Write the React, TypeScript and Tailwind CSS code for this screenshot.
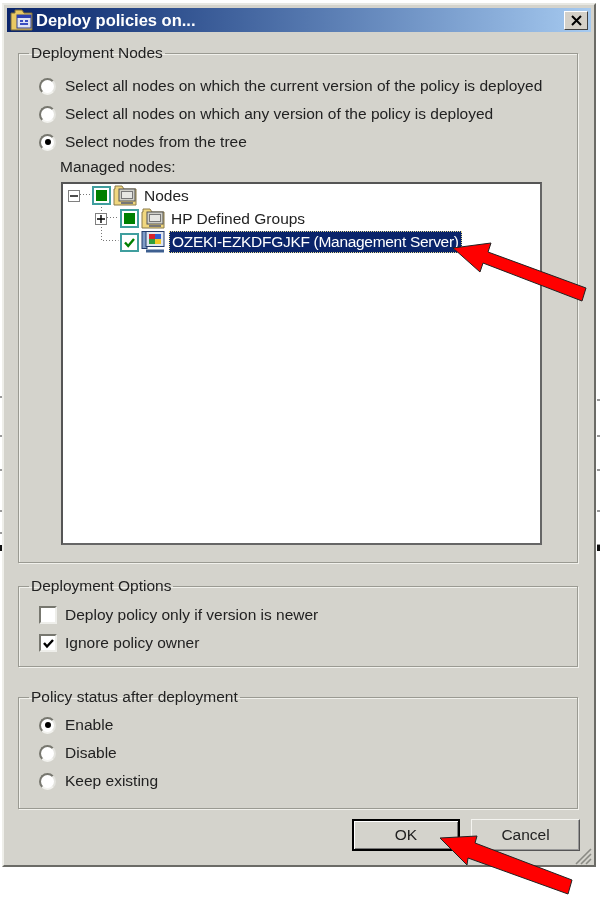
import React from 'react'

const font = "font-['Liberation_Sans',Arial,sans-serif]"

function Radio({ checked }: { checked?: boolean }) {
  return (
    <span className="relative w-[17px] h-[17px] shrink-0 rounded-full bg-white border-2 border-t-[#77776f] border-l-[#77776f] border-r-[#e4e4df] border-b-[#f2f2ee] flex items-center justify-center">
      {checked && <span className="w-[6px] h-[6px] rounded-full bg-black" />}
    </span>
  )
}

function Check({ checked }: { checked?: boolean }) {
  return (
    <span className="w-[18px] h-[18px] shrink-0 bg-white border-2 border-t-[#77776f] border-l-[#77776f] border-r-[#eeeeea] border-b-[#eeeeea] flex items-center justify-center">
      {checked && (
        <svg width="13" height="13" viewBox="0 0 13 13">
          <path d="M2 6l3 3.5L11 3" fill="none" stroke="#000" strokeWidth="2.4" />
        </svg>
      )}
    </span>
  )
}

function Option({ kind, checked, label }: { kind: 'radio' | 'check'; checked?: boolean; label: string }) {
  return (
    <div className="flex items-center h-[28px] pl-[20px]">
      <span className="w-[26px] flex">{kind === 'radio' ? <Radio checked={checked} /> : <Check checked={checked} />}</span>
      <span className="text-[15.5px] text-[#222]">{label}</span>
    </div>
  )
}

function Group({ title, className, children }: { title: string; className: string; children: React.ReactNode }) {
  return (
    <fieldset className={`border border-[#9a9a92] shadow-[inset_1px_1px_0_#f1f1ec,1px_1px_0_#f1f1ec] ml-[11px] mr-[13px] ${className}`}>
      <legend className="ml-[10px] px-[2px] text-[15.5px] leading-[20px] text-[#222]">{title}</legend>
      {children}
    </fieldset>
  )
}

function TreeCheck({ mark }: { mark: 'square' | 'tick' }) {
  return (
    <span className="w-[19px] h-[19px] shrink-0 bg-white border-2 border-[#3f9e9e] flex items-center justify-center">
      {mark === 'square' ? (
        <span className="w-[11px] h-[11px] bg-[#008000]" />
      ) : (
        <svg width="13" height="13" viewBox="0 0 13 13">
          <path d="M2 6.5l3.2 3.5L11 3" fill="none" stroke="#008000" strokeWidth="2.4" />
        </svg>
      )}
    </span>
  )
}

function Expander({ sign }: { sign: '+' | '-' }) {
  return (
    <span className="w-[12px] h-[12px] shrink-0 bg-white border border-[#808080] flex items-center justify-center">
      <svg width="8" height="8" viewBox="0 0 8 8">
        <path d={sign === '+' ? 'M0 4h8M4 0v8' : 'M0 4h8'} stroke="#000" strokeWidth="1.4" />
      </svg>
    </span>
  )
}

function FolderPc() {
  return (
    <svg width="24" height="22" viewBox="0 0 24 22" className="shrink-0">
      <path d="M1 4h1V1h7l2 3h12v16H1z" fill="#f0d77f" stroke="#8a7a4a" />
      <rect x="6" y="4" width="16" height="12" fill="#cfcfc8" stroke="#555" />
      <rect x="8.5" y="6.5" width="11" height="7" fill="#e6e6e2" stroke="#777" />
      <rect x="8" y="17" width="12" height="2" fill="#777" />
    </svg>
  )
}

function ServerPc() {
  return (
    <svg width="24" height="22" viewBox="0 0 24 22" className="shrink-0">
      <rect x="1" y="0.5" width="5" height="17" fill="#7f9cc6" stroke="#223c6c" />
      <rect x="5" y="0.5" width="18" height="15" fill="#dfe6f0" stroke="#223c6c" />
      <rect x="8" y="3" width="6" height="5" fill="#d8242a" />
      <rect x="14" y="3" width="6" height="5" fill="#2f5fd0" />
      <rect x="8" y="8" width="6" height="5" fill="#2e9e3a" />
      <rect x="14" y="8" width="6" height="5" fill="#f0c828" />
      <path d="M5 20h18" stroke="#3d5f90" strokeWidth="3" />
    </svg>
  )
}

function WindowIcon() {
  return (
    <svg width="24" height="22" viewBox="0 0 24 22" className="shrink-0">
      <path d="M1 4h4V1h7l2 3h8v17H1z" fill="#e8c862" stroke="#7a6a3a" />
      <rect x="7" y="6" width="14" height="13" fill="#dfe4f4" stroke="#31408c" />
      <rect x="7" y="6" width="14" height="3" fill="#2c3fb0" />
      <path d="M10 12h3M15 12h3M10 15h8" stroke="#3a4fc0" strokeWidth="2" />
    </svg>
  )
}

export default function App() {
  return (
    <div className={`relative w-[600px] h-[910px] bg-white overflow-hidden blur-[0.6px] ${font}`}>
      <div className="ml-[2px] mt-[3px] w-[594px] h-[864px] bg-[#d4d3cc] border-l-2 border-l-[#efefea] border-t-2 border-t-[#e8e8e3] border-r-2 border-r-[#6b6b66] border-b-2 border-b-[#6b6b66] flex flex-col px-[3px] pt-[3px]">
        <div className="h-[24px] shrink-0 bg-linear-to-r from-[#0a246a] to-[#a6caf0] flex items-center pl-[3px] pr-[3px]">
          <WindowIcon />
          <span className="ml-[2px] text-[16.5px] font-bold text-white flex-1">Deploy policies on...</span>
          <span className="w-[24px] h-[19px] bg-[#d4d0c8] border border-t-white border-l-white border-r-[#404040] border-b-[#404040] flex items-center justify-center">
            <svg width="11" height="11" viewBox="0 0 11 11">
              <path d="M1 1l9 9M10 1l-9 9" stroke="#000" strokeWidth="2" />
            </svg>
          </span>
        </div>

        <Group title="Deployment Nodes" className="mt-[11px] h-[520px] pt-[9px]">
          <Option kind="radio" label="Select all nodes on which the current version of the policy is deployed" />
          <Option kind="radio" label="Select all nodes on which any version of the policy is deployed" />
          <Option kind="radio" checked label="Select nodes from the tree" />
          <div className="pl-[41px] pt-[1px] pb-[5px] text-[15.5px] leading-[20px] text-[#222]">Managed nodes:</div>
          <div className="relative ml-[42px] w-[481px] h-[363px] bg-white border-2 border-t-[#555] border-l-[#555] border-r-[#666] border-b-[#666] pl-[5px]">
            <svg className="absolute left-0 top-0" width="80" height="70">
              <path d="M17 10.5h11M38.5 20v8M44 33.5h12M38.5 40v16.5h17" fill="none" stroke="#777" strokeDasharray="1 2" />
            </svg>
            <div className="relative flex flex-col">
              <div className="flex items-center h-[23px]">
                <Expander sign="-" />
                <span className="ml-[12px]"><TreeCheck mark="square" /></span>
                <span className="ml-[2px]"><FolderPc /></span>
                <span className="ml-[7px] text-[15.5px] text-[#222]">Nodes</span>
              </div>
              <div className="flex items-center h-[23px] pl-[27px]">
                <Expander sign="+" />
                <span className="ml-[13px]"><TreeCheck mark="square" /></span>
                <span className="ml-[2px]"><FolderPc /></span>
                <span className="ml-[6px] text-[15.5px] text-[#222]">HP Defined Groups</span>
              </div>
              <div className="flex items-center h-[24px] pl-[52px]">
                <TreeCheck mark="tick" />
                <span className="ml-[2px]"><ServerPc /></span>
                <span className="ml-[4px] h-[22px] px-[2px] flex items-center bg-[#0a246a] border border-dotted border-[#e8dc90] text-[15.5px] tracking-[-0.3px] text-white whitespace-nowrap">OZEKI-EZKDFGJKF (Management Server)</span>
              </div>
            </div>
          </div>
        </Group>

        <Group title="Deployment Options" className="mt-[13px] h-[91px] pt-[5px]">
          <Option kind="check" label="Deploy policy only if version is newer" />
          <Option kind="check" checked label="Ignore policy owner" />
        </Group>

        <Group title="Policy status after deployment" className="mt-[20px] h-[122px] pt-[4px]">
          <Option kind="radio" checked label="Enable" />
          <Option kind="radio" label="Disable" />
          <Option kind="radio" label="Keep existing" />
        </Group>

        <div className="relative flex justify-end gap-[11px] mt-[10px] pr-[11px]">
          <button className="w-[108px] h-[32px] bg-[#d4d3cc] border-2 border-black shadow-[inset_1px_1px_0_#fff,inset_-1px_-1px_0_#777] text-[15.5px] text-[#222]">OK</button>
          <button className="w-[109px] h-[32px] bg-[#d4d3cc] border border-t-[#f4f4f0] border-l-[#f4f4f0] border-r-[#555] border-b-[#555] shadow-[inset_-1px_-1px_0_#999] text-[15.5px] text-[#222]">Cancel</button>
        </div>
      </div>

      {/* grip, arrows and what shows behind the dialog */}
      <svg className="absolute left-0 top-0" width="600" height="910">
        <path d="M576 864l15-15M581 864l10-10M586 864l5-5" stroke="#8a8a84" strokeWidth="1.6" />
        <path d="M0 397h2M0 436h2M0 470h2M0 511h2M0 533h2M597 400h3M597 436h3M597 470h3M597 511h3M597 545h3" stroke="#999" strokeWidth="2" />
        <path d="M0 548h2M597 548h3" stroke="#111" strokeWidth="6" />
        <polygon points="453,248 491,243 488,252 586,288 582,301 483,263 480,272" fill="#ff0000" stroke="#222" strokeWidth="1" />
        <polygon points="440,838 477,836 475,843 572,880 568,894 468,858 467,865" fill="#ff0000" stroke="#222" strokeWidth="1" />
      </svg>
    </div>
  )
}
